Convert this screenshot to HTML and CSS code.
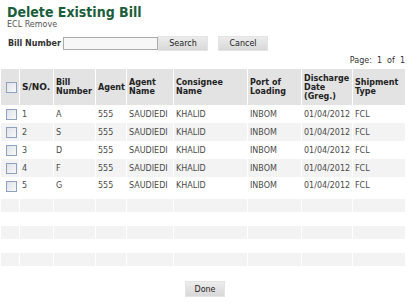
FILE: index.html
```html
<!DOCTYPE html>
<html lang="en">
<head>
    <meta charset="UTF-8">
    <title>Delete Existing Bill</title>
    <link rel="stylesheet" href="styles.css">
</head>
<body>
    <div class="page-head">
        <h1>Delete Existing Bill</h1>
        <p class="sub-title">ECL Remove</p>
    </div>
    <div class="search-bar">
        <label for="bill-number">Bill Number</label>
        <input type="text" id="bill-number">
        <button type="button" class="btn">Search</button>
        <button type="button" class="btn cancel">Cancel</button>
    </div>
    <p class="pager">Page:&nbsp; 1&nbsp; of&nbsp; 1</p>
    <table class="grid">
        <thead>
            <tr>
                <th class="col-check"><span class="chk"></span></th>
                <th class="col-sno big">S/NO.</th>
                <th class="col-bill">Bill Number</th>
                <th class="col-agent">Agent</th>
                <th class="col-aname">Agent Name</th>
                <th class="col-cons">Consignee Name</th>
                <th class="col-port">Port of Loading</th>
                <th class="col-date">Discharge Date (Greg.)</th>
                <th class="col-type">Shipment Type</th>
            </tr>
        </thead>
        <tbody>
            <tr><td><span class="chk"></span></td><td>1</td><td>A</td><td>555</td><td>SAUDIEDI</td><td>KHALID</td><td>INBOM</td><td>01/04/2012</td><td>FCL</td></tr>
            <tr class="alt"><td><span class="chk"></span></td><td>2</td><td>S</td><td>555</td><td>SAUDIEDI</td><td>KHALID</td><td>INBOM</td><td>01/04/2012</td><td>FCL</td></tr>
            <tr><td><span class="chk"></span></td><td>3</td><td>D</td><td>555</td><td>SAUDIEDI</td><td>KHALID</td><td>INBOM</td><td>01/04/2012</td><td>FCL</td></tr>
            <tr class="alt"><td><span class="chk"></span></td><td>4</td><td>F</td><td>555</td><td>SAUDIEDI</td><td>KHALID</td><td>INBOM</td><td>01/04/2012</td><td>FCL</td></tr>
            <tr class="last"><td><span class="chk"></span></td><td>5</td><td>G</td><td>555</td><td>SAUDIEDI</td><td>KHALID</td><td>INBOM</td><td>01/04/2012</td><td>FCL</td></tr>
            <tr class="alt empty"><td></td><td></td><td></td><td></td><td></td><td></td><td></td><td></td><td></td></tr>
            <tr class="empty"><td></td><td></td><td></td><td></td><td></td><td></td><td></td><td></td><td></td></tr>
            <tr class="alt empty"><td></td><td></td><td></td><td></td><td></td><td></td><td></td><td></td><td></td></tr>
            <tr class="empty"><td></td><td></td><td></td><td></td><td></td><td></td><td></td><td></td><td></td></tr>
            <tr class="alt empty"><td></td><td></td><td></td><td></td><td></td><td></td><td></td><td></td><td></td></tr>
        </tbody>
    </table>
    <div class="actions">
        <button type="button" class="btn done">Done</button>
    </div>
</body>
</html>
```

FILE: styles.css
```css
body {
    font-family: "DejaVu Sans", Verdana, sans-serif;
    font-size: 8px;
    color: #333;
    margin: 0;
    padding: 0;
    background-color: #fff;
}
.page-head {
    padding: 4px 0 0 7px;
}
.page-head h1 {
    margin: 0;
    font-family: "DejaVu Sans Condensed", "DejaVu Sans", sans-serif;
    font-size: 14px;
    line-height: 16px;
    color: #1b5e3b;
}
.sub-title {
    margin: 0;
    font-size: 8px;
    line-height: 10px;
    color: #555;
}
.search-bar {
    display: flex;
    align-items: center;
    padding: 6px 0 0 8px;
    height: 14px;
}
.search-bar label {
    font-weight: bold;
    color: #333;
    width: 55px;
}
.search-bar input {
    width: 95px;
    height: 13px;
    box-sizing: border-box;
    border: 1px solid #aaa;
    background-color: #f7f7f7;
    padding: 0 2px;
    margin: 0;
}
.btn {
    font-family: "DejaVu Sans", Verdana, sans-serif;
    font-size: 8px;
    color: #222;
    background: linear-gradient(#ececec, #d8d8d8);
    border: 1px solid #e4e4e4;
    height: 15px;
    width: 50px;
    padding: 0;
    margin: 0;
}
.cancel {
    margin-left: 10px;
}
.pager {
    margin: 6px 5px 0 0;
    text-align: right;
    line-height: 10px;
    color: #333;
}
.grid {
    margin: 3px 0 0 1px;
    width: 404px;
    border-collapse: collapse;
    table-layout: fixed;
}
.grid th {
    background-color: #e3e3e3;
    text-align: left;
    vertical-align: middle;
    font-weight: bold;
    color: #222;
    font-size: 8px;
    line-height: 9px;
    height: 36px;
    padding: 0 2px;
    border-left: 1px solid #fff;
}
.grid th.big {
    font-size: 9px;
}
.grid td {
    height: 18px;
    padding: 0 2px;
    border-left: 1px solid #fff;
    color: #4a4a4a;
    white-space: nowrap;
}
.grid th:first-child, .grid td:first-child {
    border-left: none;
}
.grid tr.alt td {
    background-color: #f3f3f3;
}
.grid tr.last td {
    height: 18px;
    vertical-align: top;
    padding-top: 4px;
}
.grid tr.empty td {
    height: 14px;
}
.grid tr.alt.empty td {
    height: 13px;
}
.col-check { width: 14px; }
.col-sno { width: 29px; }
.col-bill { width: 37px; }
.col-agent { width: 26px; }
.col-aname { width: 42px; }
.col-cons { width: 69px; }
.col-port { width: 49px; }
.col-date { width: 46px; }
.chk {
    display: block;
    width: 9px;
    height: 9px;
    margin-left: 3px;
    border: 1px solid #8ea2bd;
    background: linear-gradient(135deg, #dfe4ea, #f8f8f8);
}
.actions {
    text-align: center;
    padding-top: 15px;
}
.done {
    width: 40px;
    height: 16px;
}
```
